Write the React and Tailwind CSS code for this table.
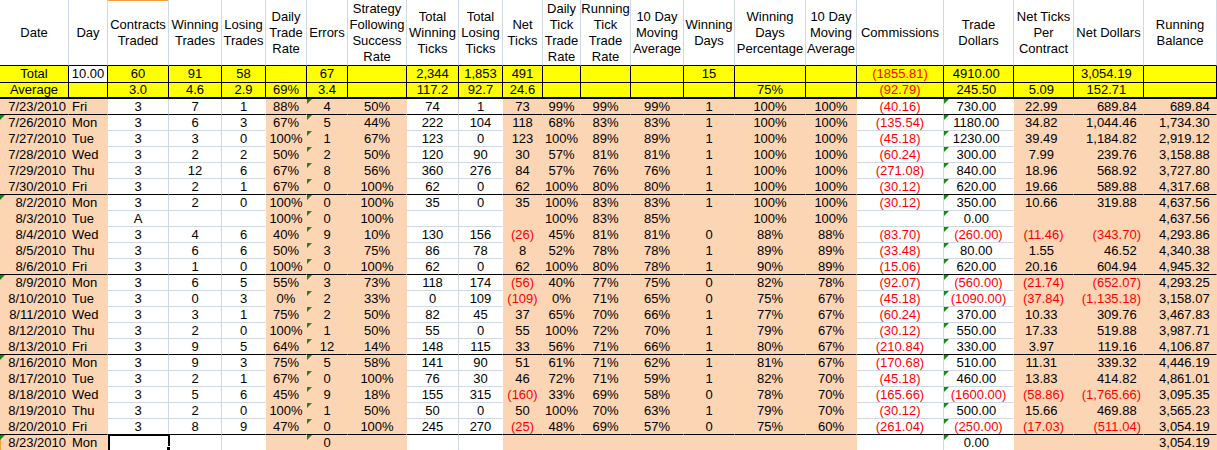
import clsx from "clsx";

// column setup: peach fill, alignment, trailing ")" space for accounting format
const COLS = [
  { peach: true, align: "right" }, // date
  { peach: true, align: "left" }, // day
  { peach: false }, // contracts
  { peach: false }, // winning trades
  { peach: false }, // losing trades
  { peach: true }, // daily trade rate
  { peach: true, tri: true }, // errors
  { peach: true }, // strategy
  { peach: false }, // total winning ticks
  { peach: false }, // total losing ticks
  { peach: true }, // net ticks
  { peach: true }, // daily tick trade rate
  { peach: true }, // running tick trade rate
  { peach: true }, // 10 day ma
  { peach: true }, // winning days
  { peach: true }, // winning days pct
  { peach: true }, // 10 day ma
  { peach: false, pad: true }, // commissions
  { peach: false, pad: true, tri: true }, // trade dollars
  { peach: true, pad: true }, // net ticks per contract
  { peach: true, pad: true, align: "right" }, // net dollars
  { peach: true, pad: true, align: "right" }, // running balance
];

const HEADERS = [
  ["Date"],
  ["Day"],
  ["Contracts", "Traded"],
  ["Winning", "Trades"],
  ["Losing", "Trades"],
  ["Daily", "Trade", "Rate"],
  ["Errors"],
  ["Strategy", "Following", "Success", "Rate"],
  ["Total", "Winning", "Ticks"],
  ["Total", "Losing", "Ticks"],
  ["Net", "Ticks"],
  ["Daily", "Tick", "Trade", "Rate"],
  ["Running", "Tick", "Trade", "Rate"],
  ["10 Day", "Moving", "Average"],
  ["Winning", "Days"],
  ["Winning", "Days", "Percentage"],
  ["10 Day", "Moving", "Average"],
  ["Commissions"],
  ["Trade", "Dollars"],
  ["Net Ticks", "Per", "Contract"],
  ["Net Dollars"],
  ["Running", "Balance"],
];

const TOTAL = ["Total", "10.00", "60", "91", "58", "", "67", "", "2,344", "1,853", "491", "", "", "", "15", "", "", "(1855.81)", "4910.00", "", "3,054.19", ""];
const AVERAGE = ["Average", "", "3.0", "4.6", "2.9", "69%", "3.4", "", "117.2", "92.7", "24.6", "", "", "", "", "75%", "", "(92.79)", "245.50", "5.09", "152.71", ""];

const ROWS = [
  { end: true, d: ["7/23/2010", "Fri", "3", "7", "1", "88%", "4", "50%", "74", "1", "73", "99%", "99%", "99%", "1", "100%", "100%", "(40.16)", "730.00", "22.99", "689.84", "689.84"] },
  { mon: true, d: ["7/26/2010", "Mon", "3", "6", "3", "67%", "5", "44%", "222", "104", "118", "68%", "83%", "83%", "1", "100%", "100%", "(135.54)", "1180.00", "34.82", "1,044.46", "1,734.30"] },
  { d: ["7/27/2010", "Tue", "3", "3", "0", "100%", "1", "67%", "123", "0", "123", "100%", "89%", "89%", "1", "100%", "100%", "(45.18)", "1230.00", "39.49", "1,184.82", "2,919.12"] },
  { d: ["7/28/2010", "Wed", "3", "2", "2", "50%", "2", "50%", "120", "90", "30", "57%", "81%", "81%", "1", "100%", "100%", "(60.24)", "300.00", "7.99", "239.76", "3,158.88"] },
  { d: ["7/29/2010", "Thu", "3", "12", "6", "67%", "8", "56%", "360", "276", "84", "57%", "76%", "76%", "1", "100%", "100%", "(271.08)", "840.00", "18.96", "568.92", "3,727.80"] },
  { end: true, d: ["7/30/2010", "Fri", "3", "2", "1", "67%", "0", "100%", "62", "0", "62", "100%", "80%", "80%", "1", "100%", "100%", "(30.12)", "620.00", "19.66", "589.88", "4,317.68"] },
  { mon: true, d: ["8/2/2010", "Mon", "3", "2", "0", "100%", "0", "100%", "35", "0", "35", "100%", "83%", "83%", "1", "100%", "100%", "(30.12)", "350.00", "10.66", "319.88", "4,637.56"] },
  { d: ["8/3/2010", "Tue", "A", "", "", "100%", "0", "100%", "", "", "", "100%", "83%", "85%", "", "100%", "100%", "", "0.00", "", "", "4,637.56"] },
  { d: ["8/4/2010", "Wed", "3", "4", "6", "40%", "9", "10%", "130", "156", "(26)", "45%", "81%", "81%", "0", "88%", "88%", "(83.70)", "(260.00)", "(11.46)", "(343.70)", "4,293.86"] },
  { d: ["8/5/2010", "Thu", "3", "6", "6", "50%", "3", "75%", "86", "78", "8", "52%", "78%", "78%", "1", "89%", "89%", "(33.48)", "80.00", "1.55", "46.52", "4,340.38"] },
  { end: true, d: ["8/6/2010", "Fri", "3", "1", "0", "100%", "0", "100%", "62", "0", "62", "100%", "80%", "78%", "1", "90%", "89%", "(15.06)", "620.00", "20.16", "604.94", "4,945.32"] },
  { mon: true, d: ["8/9/2010", "Mon", "3", "6", "5", "55%", "3", "73%", "118", "174", "(56)", "40%", "77%", "75%", "0", "82%", "78%", "(92.07)", "(560.00)", "(21.74)", "(652.07)", "4,293.25"] },
  { d: ["8/10/2010", "Tue", "3", "0", "3", "0%", "2", "33%", "0", "109", "(109)", "0%", "71%", "65%", "0", "75%", "67%", "(45.18)", "(1090.00)", "(37.84)", "(1,135.18)", "3,158.07"] },
  { d: ["8/11/2010", "Wed", "3", "3", "1", "75%", "2", "50%", "82", "45", "37", "65%", "70%", "66%", "1", "77%", "67%", "(60.24)", "370.00", "10.33", "309.76", "3,467.83"] },
  { d: ["8/12/2010", "Thu", "3", "2", "0", "100%", "1", "50%", "55", "0", "55", "100%", "72%", "70%", "1", "79%", "67%", "(30.12)", "550.00", "17.33", "519.88", "3,987.71"] },
  { end: true, d: ["8/13/2010", "Fri", "3", "9", "5", "64%", "12", "14%", "148", "115", "33", "56%", "71%", "66%", "1", "80%", "67%", "(210.84)", "330.00", "3.97", "119.16", "4,106.87"] },
  { mon: true, d: ["8/16/2010", "Mon", "3", "9", "3", "75%", "5", "58%", "141", "90", "51", "61%", "71%", "62%", "1", "81%", "67%", "(170.68)", "510.00", "11.31", "339.32", "4,446.19"] },
  { d: ["8/17/2010", "Tue", "3", "2", "1", "67%", "0", "100%", "76", "30", "46", "72%", "71%", "59%", "1", "82%", "70%", "(45.18)", "460.00", "13.83", "414.82", "4,861.01"] },
  { d: ["8/18/2010", "Wed", "3", "5", "6", "45%", "9", "18%", "155", "315", "(160)", "33%", "69%", "58%", "0", "78%", "70%", "(165.66)", "(1600.00)", "(58.86)", "(1,765.66)", "3,095.35"] },
  { d: ["8/19/2010", "Thu", "3", "2", "0", "100%", "1", "50%", "50", "0", "50", "100%", "70%", "63%", "1", "79%", "70%", "(30.12)", "500.00", "15.66", "469.88", "3,565.23"] },
  { end: true, d: ["8/20/2010", "Fri", "3", "8", "9", "47%", "0", "100%", "245", "270", "(25)", "48%", "69%", "57%", "0", "75%", "60%", "(261.04)", "(250.00)", "(17.03)", "(511.04)", "3,054.19"] },
  { mon: true, last: true, d: ["8/23/2010", "Mon", "", "", "", "", "0", "", "", "", "", "", "", "", "", "", "", "", "0.00", "", "", "3,054.19"] },
];

const Triangle = () => (
  <svg className="absolute left-0 top-0" width="5" height="5" viewBox="0 0 5 5">
    <path d="M0 0H5L0 5Z" fill="#138a13" />
  </svg>
);

const Value = ({ v, pad }) => {
  const neg = v.startsWith("(");
  return (
    <span className={clsx("whitespace-nowrap", neg && "text-[#ff0000]")}>
      {v}
      {pad && v && !neg && <span className="invisible">)</span>}
    </span>
  );
};

const alignClass = (align) =>
  align === "right" ? "justify-end pr-[2px]" : align === "left" ? "justify-start pl-[3px]" : "justify-center";

const SummaryRow = ({ values, avg }) => (
  <>
    {values.map((v, i) => (
      <div
        key={i}
        className={clsx(
          "flex items-center border-r border-r-black border-b-black",
          avg ? "h-[16px] border-b-2 leading-[14px]" : "h-[17px] border-b leading-[16px]",
          !avg && i === 1 ? "bg-white" : "bg-[#ffff00]"
        )}
      >
        <div className="flex w-full justify-center">
          <Value v={v} pad={COLS[i].pad} />
        </div>
      </div>
    ))}
  </>
);

const DataRow = ({ row }) => (
  <>
    {row.d.map((v, i) => {
      const col = COLS[i];
      const next = COLS[i + 1];
      const selected = row.last && i === 2;
      return (
        <div
          key={i}
          className={clsx(
            "relative flex h-4 items-center border-r border-b leading-[15px]",
            col.peach ? "bg-[#fcd5b4]" : "bg-white",
            row.end ? "border-b-black" : col.peach ? "border-b-transparent" : "border-b-[#d0d7e5]",
            !col.peach && next && !next.peach ? "border-r-[#d0d7e5]" : "border-r-transparent",
            alignClass(col.align),
            row.last && i === 0 && "shadow-[inset_1px_0_0_#f6a03c]"
          )}
        >
          {(col.tri || (i === 0 && row.mon)) && <Triangle />}
          <Value v={v} pad={col.pad} />
          {selected && (
            <div className="absolute -top-px left-0 -right-[2px] -bottom-[2px] z-10 border-2 border-black">
              <div className="absolute -right-[3px] -bottom-[1px] h-[5px] w-[5px] border border-white bg-black" />
            </div>
          )}
        </div>
      );
    })}
  </>
);

export default function App() {
  return (
    <div className="h-[450px] w-[1217px] overflow-hidden bg-white font-['Liberation_Sans',Arial,sans-serif] text-[13px] text-black">
      <div className="grid grid-cols-[69px_39px_61px_53px_44px_41px_41px_59px_52px_44px_40px_38px_50px_53px_51px_71px_51px_87px_70px_60px_70px_73px]">
        {HEADERS.map((lines, i) => (
          <div
            key={i}
            className={clsx(
              "flex h-[66px] flex-col items-center justify-center border-r border-b border-r-[#d0d7e5] border-b-black text-center leading-[16px]",
              i === 2 && "shadow-[inset_0_1px_0_#f6a03c]"
            )}
          >
            {lines.map((l) => (
              <span key={l} className="whitespace-nowrap">
                {l}
              </span>
            ))}
          </div>
        ))}
        <SummaryRow values={TOTAL} />
        <SummaryRow values={AVERAGE} avg />
        {ROWS.map((row) => (
          <DataRow key={row.d[0]} row={row} />
        ))}
      </div>
    </div>
  );
}
